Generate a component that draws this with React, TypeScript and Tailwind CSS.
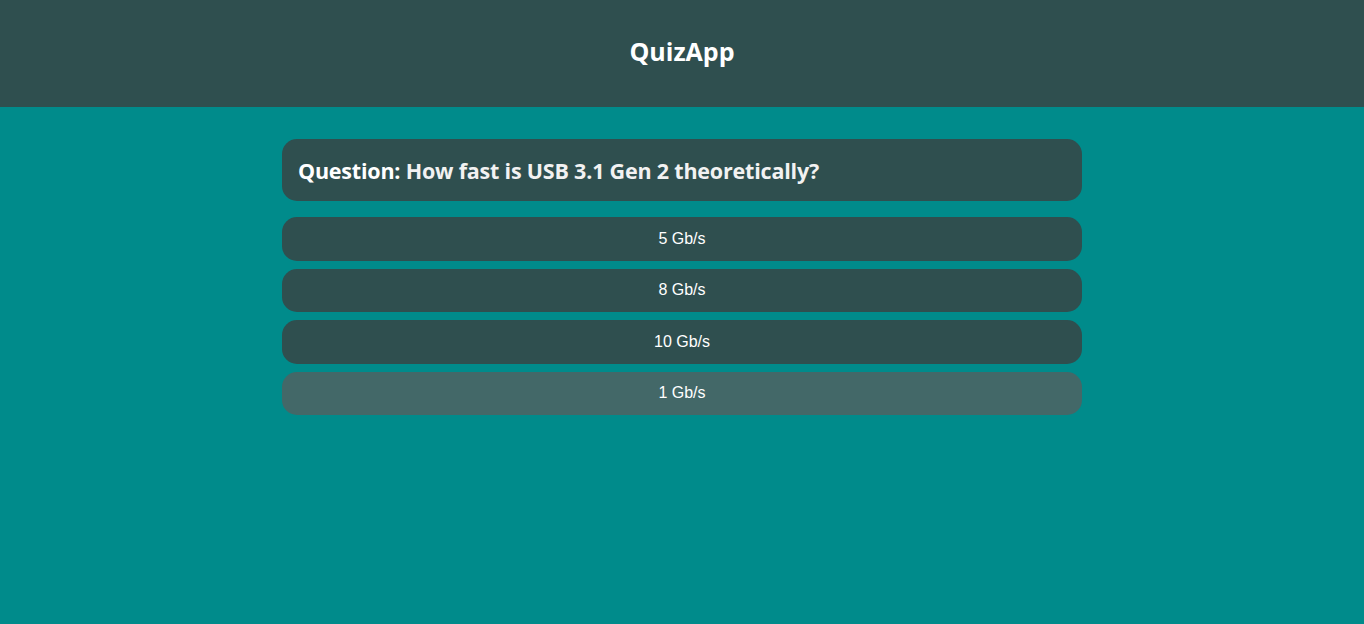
const answers = ['5 Gb/s', '8 Gb/s', '10 Gb/s', '1 Gb/s'];

const App = () => {
  return (
    <div className="min-h-screen w-full bg-[#008b8b]">
      <header className="flex h-[107px] items-center justify-center bg-[#2f4f4f] pb-[3px]">
        <h1 className="font-['Open_Sans',sans-serif] text-[25px] font-bold text-white">
          QuizApp
        </h1>
      </header>

      <main className="mx-auto w-[800px] pt-8">
        <div className="flex h-[62px] items-center rounded-[15px] bg-[#2f4f4f] px-4 pt-[2px]">
          <h2 className="font-['Open_Sans',sans-serif] text-[21.5px] font-bold tracking-[-0.2px] text-[#f2f2f2]">
            <span className="text-white">Question:</span> How fast is USB 3.1 Gen 2 theoretically?
          </h2>
        </div>

        <div className="mt-4 flex flex-col gap-2">
          {answers.map((answer, index) => (
            <button
              key={answer}
              className={`flex h-[43.5px] w-full items-center justify-center rounded-[15px] font-['Liberation_Sans',Arial,sans-serif] text-[16px] text-white ${
                index === 3 ? 'bg-[#436868]' : 'bg-[#2f4f4f]'
              }`}
            >
              {answer}
            </button>
          ))}
        </div>
      </main>
    </div>
  );
};

export default App;
